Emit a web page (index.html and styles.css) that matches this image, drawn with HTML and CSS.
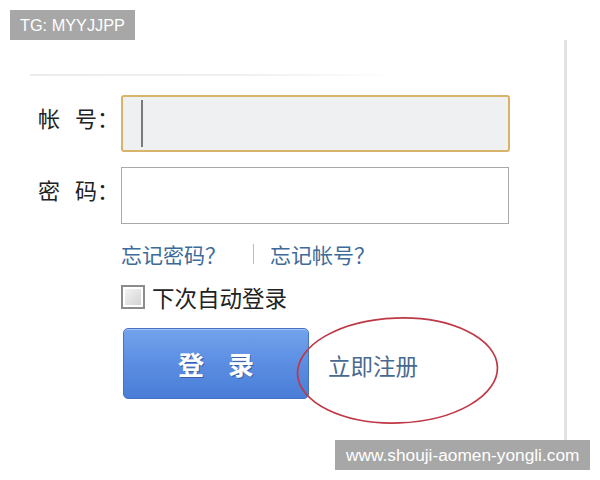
FILE: index.html
```html
<!DOCTYPE html>
<html lang="zh-CN">
<head>
<meta charset="utf-8">
<title>登录</title>
<link rel="stylesheet" href="styles.css">
</head>
<body>
<div class="page">
  <div class="frame">
    <div class="topline"></div>
    <form class="form">
      <div class="row">
        <label class="label"><span class="ch">帐</span><span>号：</span></label>
        <div class="input input-focus"><span class="caret"></span></div>
      </div>
      <div class="row row-pass">
        <label class="label"><span class="ch">密</span><span>码：</span></label>
        <div class="input"></div>
      </div>
      <div class="links">
        <a class="link">忘记密码？</a>
        <span class="sep"></span>
        <a class="link">忘记帐号？</a>
      </div>
      <div class="remember">
        <span class="checkbox"></span>
        <span class="remember-text">下次自动登录</span>
      </div>
      <div class="actions">
        <button type="button" class="btn">登 录</button>
        <a class="register">立即注册</a>
      </div>
    </form>
  </div>
  <svg class="circle" width="204" height="110" viewBox="0 0 204 110">
    <ellipse cx="101.5" cy="54.5" rx="100" ry="52.5" fill="none" stroke="#bf3845" stroke-width="1.7" transform="rotate(-2 101.5 54.5)"/>
  </svg>
  <div class="badge badge-tg">TG: MYYJJPP</div>
  <div class="badge badge-url">www.shouji-aomen-yongli.com</div>
</div>
</body>
</html>
```
FILE: styles.css
```css
* { box-sizing: border-box; }
html, body { margin: 0; padding: 0; background: #fff; }
body { font-family: "Noto Sans CJK SC", "Liberation Sans", sans-serif; }
.page { position: relative; width: 600px; height: 480px; overflow: hidden; }

.frame {
  margin-top: 40px;
  width: 567px;
  height: 400px;
  border-right: 3px solid #e3e3e3;
  padding-top: 34px;
}
.topline {
  margin-left: 30px;
  width: 370px;
  height: 2px;
  background: linear-gradient(to right, #ececec, #f0f0f0 60%, rgba(240,240,240,0));
}
.form { margin: 19px 0 0 0; }
.row { display: flex; align-items: center; height: 57px; }
.row-pass { margin-top: 15px; }
.label {
  display: flex;
  justify-content: flex-end;
  width: 121px;
  padding-right: 2px;
  padding-bottom: 14px;
  font-size: 22px;
  line-height: 30px;
  color: #222;
}
.ch { margin-right: 15px; }
.input {
  position: relative;
  width: 388px;
  height: 57px;
  border: 1px solid #a9a9a9;
  background: #fff;
}
.input-focus {
  width: 389px;
  border: 2px solid #d8b36a;
  border-radius: 3px;
  background: #eff0f1;
}
.caret {
  position: absolute;
  left: 18px;
  top: 3px;
  width: 2px;
  height: 47px;
  background: #7a7a7a;
}
.links {
  display: flex;
  align-items: center;
  margin: 17px 0 0 121px;
  height: 26px;
}
.link { font-size: 21px; color: #3d6a98; line-height: 26px; }
.sep {
  width: 1px;
  height: 20px;
  background: #bdbdbd;
  margin: 0 16px 0 27px;
}
.remember {
  display: flex;
  align-items: center;
  margin: 17px 0 0 121px;
  height: 26px;
}
.checkbox {
  width: 24px;
  height: 24px;
  border: 2px solid #8c8c8c;
  background: linear-gradient(135deg, #f7f7f7, #cfcfcf);
  box-shadow: inset 0 0 0 2px #fff;
}
.remember-text { margin-left: 7px; font-size: 22.5px; color: #222; line-height: 26px; }
.actions {
  display: flex;
  align-items: center;
  margin: 18px 0 0 123px;
}
.btn {
  width: 186px;
  height: 71px;
  border: 1px solid #4672c2;
  border-radius: 5px;
  background: linear-gradient(to bottom, #72a3ec, #5b8ee2 50%, #4a7dd6);
  box-shadow: inset 0 1px 0 rgba(255,255,255,0.35);
  color: #fff;
  font-family: "Noto Sans CJK SC", sans-serif;
  font-size: 26px;
  font-weight: bold;
  letter-spacing: 9px;
  text-indent: 9px;
  text-shadow: 1px 1px 0 #3a5ea8;
  padding: 0;
}
.register { margin-left: 19px; font-size: 22.5px; color: #4a6990; margin-top: 3px; }

.circle { position: absolute; left: 296px; top: 316px; }

.badge {
  position: absolute;
  background: #a7a7a7;
  color: #fff;
  font-family: "Liberation Sans", Arial, sans-serif;
  height: 30px;
  line-height: 30px;
  white-space: nowrap;
}
.badge-tg { left: 10px; top: 10px; width: 125px; padding-left: 10px; font-size: 16.3px; }
.badge-url { left: 335px; top: 440px; width: 255px; padding-left: 11px; font-size: 17.3px; }
```
